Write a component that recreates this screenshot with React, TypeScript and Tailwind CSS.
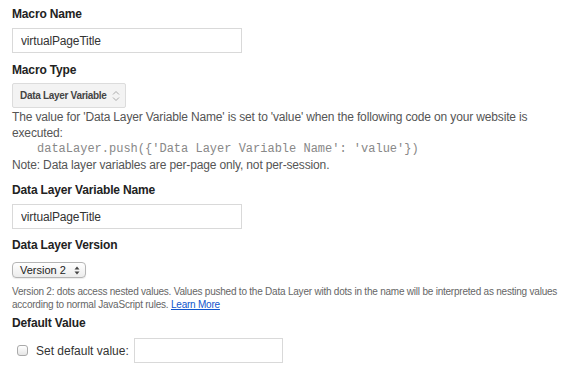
import { useState } from 'react';

function UpDown() {
  return (
    <svg width="8" height="12" viewBox="0 0 8 12" className="text-[#aaa]">
      <path d="M1 4.5L4 1.5L7 4.5" fill="none" stroke="currentColor" strokeWidth="1" />
      <path d="M1 7.5L4 10.5L7 7.5" fill="none" stroke="currentColor" strokeWidth="1" />
    </svg>
  );
}

export default function App() {
  const [name, setName] = useState<string>('virtualPageTitle');
  const [varName, setVarName] = useState<string>('virtualPageTitle');
  const [useDefault, setUseDefault] = useState<boolean>(false);
  const [defaultValue, setDefaultValue] = useState<string>('');

  return (
    <div className="min-h-screen bg-white pl-3 pt-[6px] font-['Liberation_Sans',Arial,sans-serif] text-[12px] text-[#222]">
      <div className="font-bold leading-4 tracking-[-0.15px]">Macro Name</div>
      <input
        className="mt-[6px] block h-[25px] w-[230px] border border-[#d9d9d9] px-2 text-[12px] tracking-[-0.15px] text-[#333] outline-none"
        value={name}
        onChange={(e) => setName(e.target.value)}
      />

      <div className="mt-[9px] font-bold leading-4 tracking-[-0.15px]">Macro Type</div>
      <div className="mt-[5px] flex h-[25px] w-[114px] items-center justify-between rounded-[2px] border border-[#dcdcdc] bg-[#f3f3f3] pl-[7px] pr-[5px]">
        <span className="whitespace-nowrap text-[10px] font-bold tracking-[-0.3px] text-[#444]">Data Layer Variable</span>
        <UpDown />
      </div>

      <div className="mt-[1px] leading-4 tracking-[-0.15px] text-[#555]">
        The value for 'Data Layer Variable Name' is set to 'value' when the following code on your website is executed:
        <div className="pl-[25px] font-['Liberation_Mono',monospace] text-[12px] tracking-normal text-[#888]">
          dataLayer.push({'{'}'Data Layer Variable Name': 'value'{'}'})
        </div>
        <div>Note: Data layer variables are per-page only, not per-session.</div>
      </div>

      <div className="mt-[9px] font-bold leading-4 tracking-[-0.15px]">Data Layer Variable Name</div>
      <input
        className="mt-[6px] block h-[25px] w-[230px] border border-[#d9d9d9] px-2 text-[12px] tracking-[-0.15px] text-[#333] outline-none"
        value={varName}
        onChange={(e) => setVarName(e.target.value)}
      />

      <div className="mt-[8px] font-bold leading-4 tracking-[-0.15px]">Data Layer Version</div>
      <div className="mt-[9px] flex h-[16px] w-[74px] items-center justify-between rounded-[4px] border border-[#b5b5b5] bg-gradient-to-b from-white to-[#ececec] pl-[7px] pr-[5px] shadow-[0_1px_1px_rgba(0,0,0,0.08)]">
        <span className="text-[11px] leading-none text-[#222]">Version 2</span>
        <svg width="6" height="9" viewBox="0 0 6 9" className="text-[#444]">
          <path d="M0.5 3.5L3 0.5L5.5 3.5Z" fill="currentColor" />
          <path d="M0.5 5.5L3 8.5L5.5 5.5Z" fill="currentColor" />
        </svg>
      </div>

      <div className="mt-[7px] text-[10px] leading-[13px] tracking-[-0.22px] text-[#666]">
        Version 2: dots access nested values. Values pushed to the Data Layer with dots in the name will be interpreted as nesting values according to normal JavaScript rules.{' '}
        <a href="#" className="text-[#1155cc] underline">
          Learn More
        </a>
      </div>

      <div className="mt-[4px] font-bold leading-4 tracking-[-0.15px]">Default Value</div>
      <div className="mt-[7px] flex items-center">
        <input
          type="checkbox"
          className="ml-[5px] h-[11px] w-[11px] appearance-none rounded-[3px] border border-[#aaa] bg-gradient-to-b from-white to-[#e6e6e6] checked:bg-[#4d90fe]"
          checked={useDefault}
          onChange={(e) => setUseDefault(e.target.checked)}
        />
        <span className="ml-[8px] text-[12px] text-[#333]">Set default value:</span>
        <input
          className="ml-[5px] h-[25px] w-[149px] border border-[#d9d9d9] px-2 text-[12px] outline-none"
          value={defaultValue}
          onChange={(e) => setDefaultValue(e.target.value)}
        />
      </div>
    </div>
  );
}
